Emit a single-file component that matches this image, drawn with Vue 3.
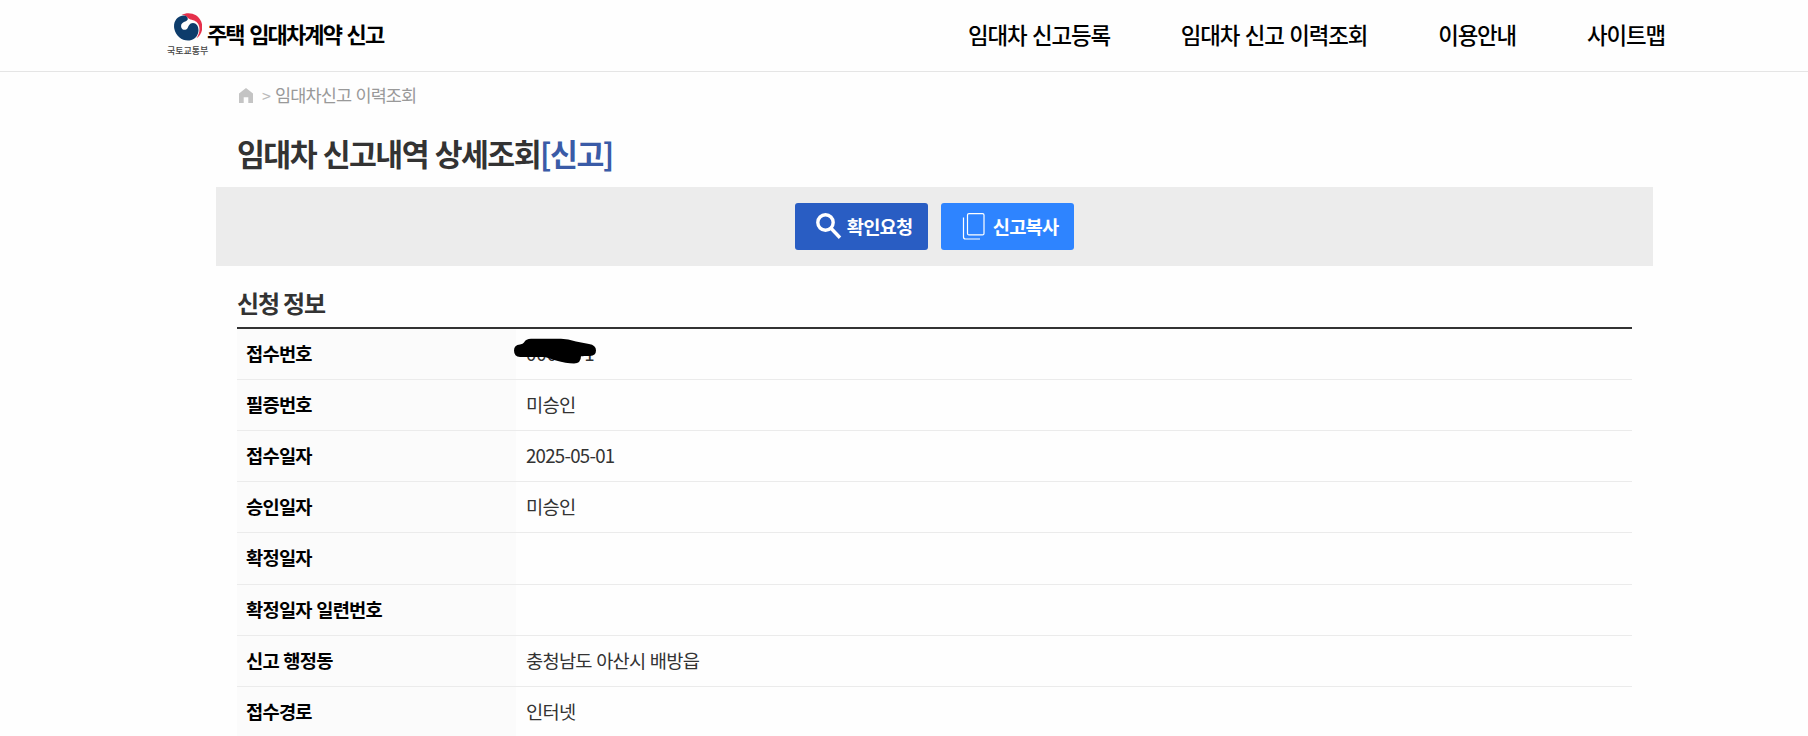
<template>
  <div class="page">
    <header class="header">
      <a class="logo" href="#">
        <span class="ministry">
          <svg class="emblem" viewBox="0 0 28 28" aria-hidden="true">
            <path class="emblem-red" d="M7.500 1.800C15-1.800 24 .8 27.200 8.500c2.600 6.800.3 13.500-4.700 16.700 3-4.500 3.800-9.500 2.200-13.200-1.500-3.700-4.700-4.700-8.200-5.500C13.500 5.800 13 2 7.500 1.800Z" />
            <path class="emblem-blue" d="M9 2.600C2.500 3.500-1 9.500.3 15.800 1.800 23.500 8.500 28.300 15.500 27.500c5.500-.7 9-5.500 9-10.300 0-4.200-2.300-7.200-5.500-7.200-3.800 0-4.300 3.300-5.500 5.200-1.500 2.300-4.800 2.200-6-.3-1.200-2.700.3-5.200 3-6.100 2.300-.8 3.500-1.600 3.300-3C13.600 4 12 2.200 9 2.600Z" />
          </svg>
          <span class="ministry-name">국토교통부</span>
        </span>
        <span class="logo-text">주택 임대차계약 신고</span>
      </a>
      <nav class="nav">
        <a v-for="item in menu" :key="item" href="#">{{ item }}</a>
      </nav>
    </header>

    <main class="content">
      <div class="breadcrumb">
        <svg class="home" viewBox="0 0 14 15" aria-hidden="true">
          <path d="M7 0 0 5.500V15h4.700V9.200h4.600V15H14V5.500Z" />
        </svg>
        <span class="arrow">&gt;</span>
        <span class="crumb">임대차신고 이력조회</span>
      </div>

      <h2 class="title">임대차 신고내역 상세조회<span>[신고]</span></h2>

      <div class="actions">
        <button class="btn btn-confirm" type="button">
          <svg viewBox="0 0 26 27" aria-hidden="true">
            <circle cx="9.500" cy="9.500" r="7.700" />
            <path d="M15 15.300 24 24.700" />
          </svg>
          <span>확인요청</span>
        </button>
        <button class="btn btn-copy" type="button">
          <svg viewBox="0 0 26 27" aria-hidden="true">
            <rect x="6.500" y=".6" width="16.500" height="21.300" rx="1.500" />
            <path d="M2.500 4.500V24q0 2 2 2H19" />
          </svg>
          <span>신고복사</span>
        </button>
      </div>

      <h3 class="section-title">신청 정보</h3>
      <dl class="info">
        <div v-for="row in rows" :key="row.label" class="row">
          <dt>{{ row.label }}</dt>
          <dd>
            <span v-if="row.masked" class="masked">
              {{ row.value }}
              <svg class="scribble" viewBox="0 0 82 26" aria-hidden="true">
                <path d="M6 6.500Q9 6 10 4.500 12 .8 17 .8H47Q54 1 62 3.500L75 6Q82 7 82 12.500 82 17.500 76 18H67Q67 25.500 60 25.500 52 25.500 42 22.500L31 19H6Q0 18.500 0 12.500 0 7 6 6.500Z" />
              </svg>
            </span>
            <template v-else>{{ row.value }}</template>
          </dd>
        </div>
      </dl>
    </main>
  </div>
</template>

<script setup>
const menu = ["임대차 신고등록", "임대차 신고 이력조회", "이용안내", "사이트맵"];

const rows = [
  { label: "접수번호", value: "00000-1", masked: true },
  { label: "필증번호", value: "미승인" },
  { label: "접수일자", value: "2025-05-01" },
  { label: "승인일자", value: "미승인" },
  { label: "확정일자", value: "" },
  { label: "확정일자 일련번호", value: "" },
  { label: "신고 행정동", value: "충청남도 아산시 배방읍" },
  { label: "접수경로", value: "인터넷" },
];
</script>

<style>
body {
  margin: 0;
  overflow: hidden;
}
</style>

<style scoped>
.page {
  height: 736px;
  overflow: hidden;
  background: #fefefe;
  color: #333;
  font-family: "Noto Sans CJK KR", sans-serif;
}
.header {
  box-sizing: border-box;
  height: 72px;
  padding: 0 143px 0 167px;
  display: flex;
  justify-content: space-between;
  border-bottom: 1px solid #e5e5e5;
}
a {
  color: #000;
  text-decoration: none;
}
.logo {
  display: flex;
  align-items: flex-start;
}
.ministry {
  width: 40px;
  padding-top: 13px;
  display: flex;
  flex-direction: column;
}
.emblem {
  width: 28px;
  height: 28px;
  margin-left: 7px;
}
.emblem-red {
  fill: #e5304b;
}
.emblem-blue {
  fill: #0d3c6b;
}
.ministry-name {
  margin-top: 4px;
  color: #444;
  font-size: 9px;
  line-height: 12px;
  font-weight: 500;
  white-space: nowrap;
}
.logo-text {
  margin-top: 17px;
  font-size: 22px;
  line-height: 32px;
  font-weight: 700;
  letter-spacing: -1.900px;
  word-spacing: 2.500px;
  white-space: nowrap;
}
.nav {
  display: flex;
  gap: 71px;
  font-size: 22.400px;
  line-height: 68px;
  font-weight: 500;
  letter-spacing: -0.05em;
  word-spacing: 0.07em;
}
.content {
  width: 1437px;
  margin-left: 216px;
}
.breadcrumb {
  height: 46px;
  padding-left: 23px;
  display: flex;
  align-items: center;
  color: #999;
  font-size: 17.500px;
  letter-spacing: -0.05em;
  word-spacing: 0.07em;
}
.home {
  width: 14px;
  height: 15px;
  fill: #c4c4c4;
}
.arrow {
  margin: 0 5px 0 9px;
  color: #bbb;
  font-size: 16px;
}
.crumb {
  padding-bottom: 2px;
}
.title {
  margin: 0;
  padding: 14px 21px 0;
  height: 55px;
  font-size: 30.300px;
  line-height: 42px;
  font-weight: 700;
  letter-spacing: -0.05em;
  word-spacing: 0.04em;
}
.title span {
  color: #3a5ba7;
}
.actions {
  height: 79px;
  display: flex;
  align-items: center;
  justify-content: center;
  gap: 13px;
  background: #ececec;
}
.btn {
  width: 133px;
  height: 47px;
  padding: 0 15.500px 0 21px;
  display: flex;
  align-items: center;
  justify-content: space-between;
  border: 0;
  border-radius: 3px;
  color: #fff;
  font-family: inherit;
  font-size: 18.700px;
  font-weight: 700;
  letter-spacing: -0.04em;
  white-space: nowrap;
}
.btn span {
  padding-bottom: 2px;
}
.btn svg {
  width: 26px;
  height: 27px;
  fill: none;
  stroke: #fff;
}
.btn-confirm {
  background: #295dc3;
}
.btn-confirm svg {
  stroke-width: 3.400;
}
.btn-copy {
  padding-left: 20px;
  background: #2e84ff;
}
.btn-copy svg {
  stroke-width: 1.200;
}
.section-title {
  margin: 0 21px;
  padding-top: 20px;
  height: 40.600px;
  border-bottom: 2px solid #333;
  font-size: 24px;
  line-height: 34px;
  font-weight: 700;
  letter-spacing: -0.05em;
}
.info {
  margin: 0 21px;
  font-size: 18.700px;
  letter-spacing: -0.04em;
  word-spacing: 0.05em;
}
.row {
  box-sizing: border-box;
  height: 51.200px;
  display: grid;
  grid-template-columns: 279px 1fr;
  border-bottom: 1px solid #ebebeb;
  line-height: 48px;
}
dt {
  padding-left: 9px;
  background: #fbfbfb;
  color: #000;
  font-weight: 700;
}
dd {
  margin: 0;
  padding-left: 10px;
}
.masked {
  position: relative;
  letter-spacing: 0;
}
.scribble {
  position: absolute;
  top: -1px;
  left: -12px;
  width: 82px;
  height: 26px;
  fill: #000;
}
</style>
